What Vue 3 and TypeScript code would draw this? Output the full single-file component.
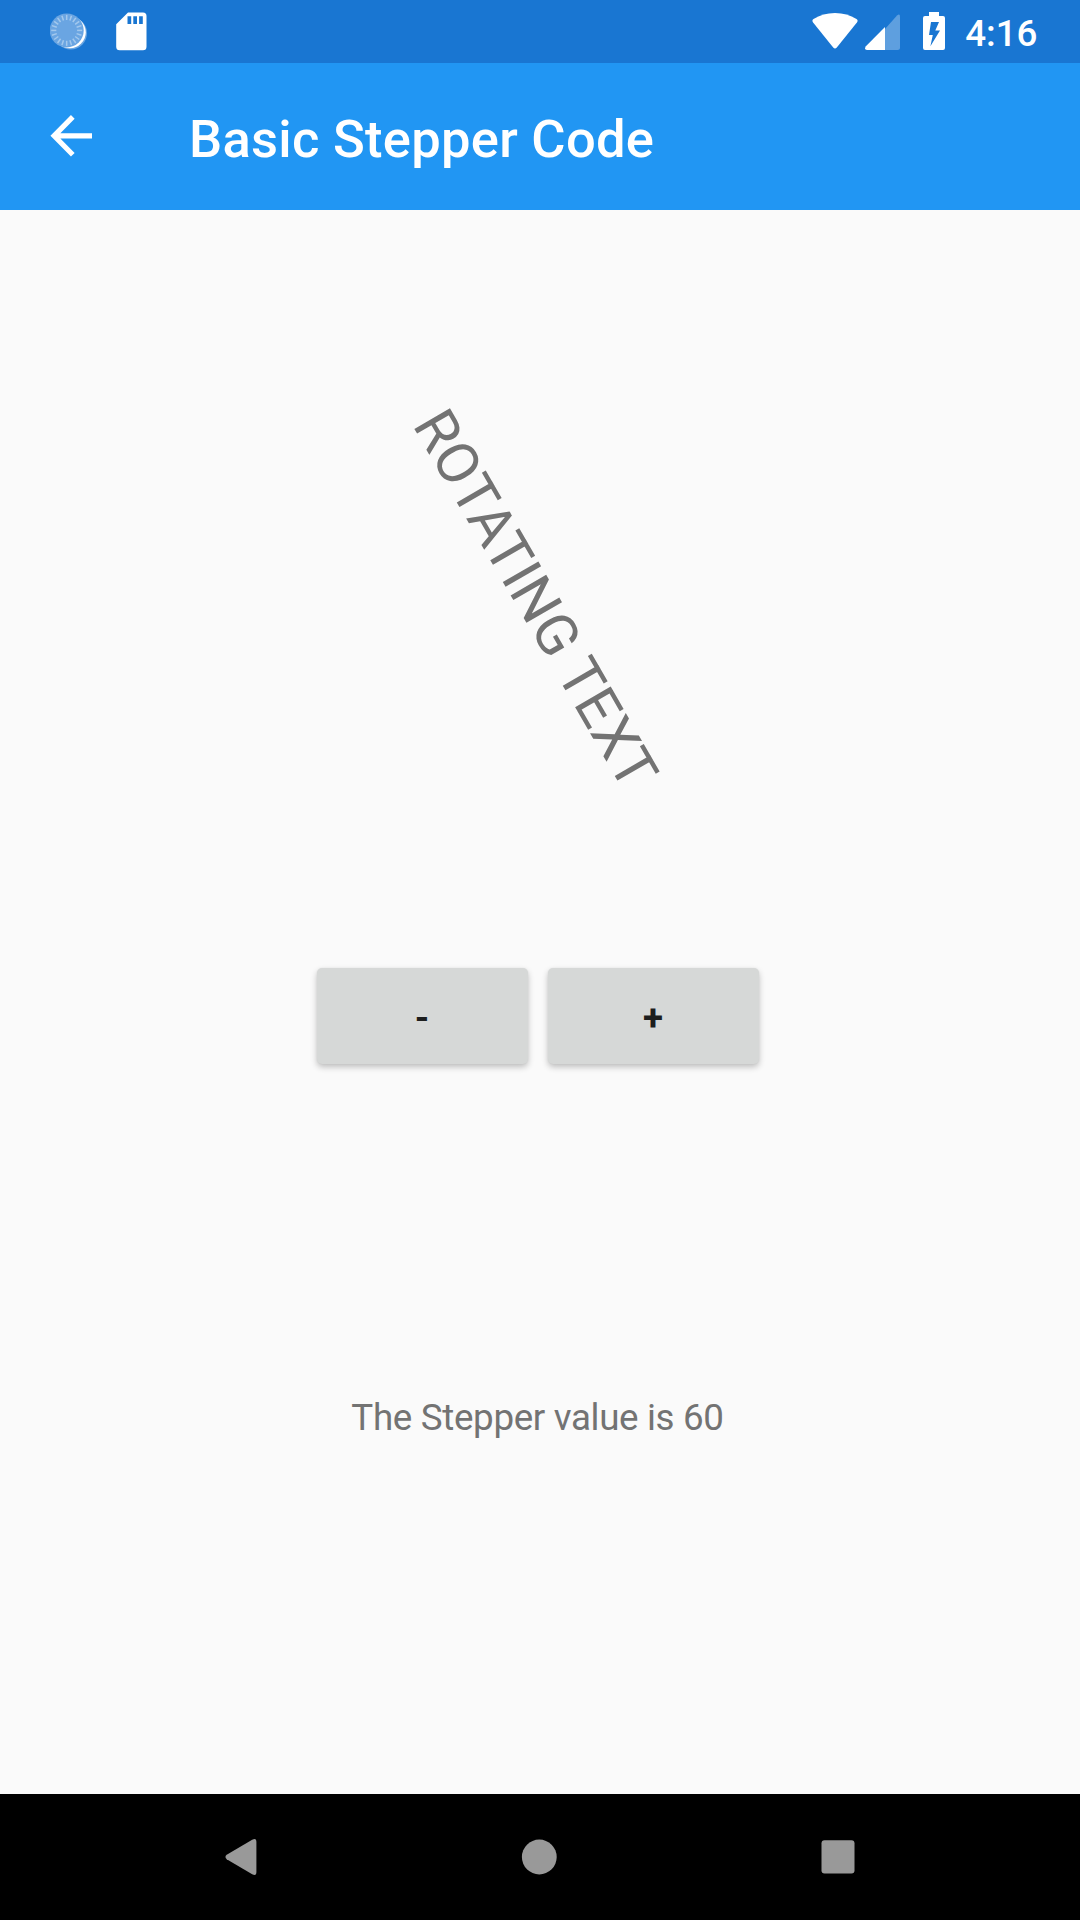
<script setup lang="ts">
import { computed, ref } from 'vue'

const increment = 30
const maximum = 360
const value = ref(60)

const rotation = computed(() => ({ transform: `rotate(${value.value}deg)` }))
const ticks = Array.from({ length: 20 }, (_, i) => i * 18)

function step(delta: number): void {
  value.value = Math.min(maximum, Math.max(0, value.value + delta))
}
</script>

<template>
  <div class="screen">
    <header class="status">
      <div class="status-left">
        <svg width="40" height="40" viewBox="0 0 40 40">
          <circle cx="20.8" cy="21.3" r="16.2" fill="#fff" opacity="0.35" />
          <circle cx="19.8" cy="20.3" r="16" fill="#fff" />
          <circle cx="16.7" cy="18.4" r="17" fill="#6aa5e2" />
          <g stroke="#a3c8ed" stroke-width="1.5">
            <line v-for="a in ticks" :key="a" x1="16.7" y1="2.9" x2="16.7" y2="8" :transform="`rotate(${a} 16.7 18.4)`" />
          </g>
        </svg>
        <svg class="sd" width="32" height="40" viewBox="0 0 32 40">
          <path fill="#fff" fill-rule="evenodd" d="M12 .6H27Q30.5.6 30.5 4.1V34.8Q30.5 38.3 27 38.3H3.7Q.2 38.3 .2 34.8V12.2ZM11.5 4.3V12H15.2V4.3ZM17.3 4.3V12H21V4.3ZM23.1 4.3V12H26.8V4.3Z" />
        </svg>
      </div>
      <div class="status-right">
        <svg width="46" height="37" viewBox="0 0 46 37">
          <path fill="#fff" d="M1.1 10.5Q-.5 8.5 1.5 7.1Q10.8 1 23 1T44.5 7.1Q46.5 8.5 44.9 10.5L24.8 35.5Q23 37.6 21.2 35.5Z" />
        </svg>
        <svg class="cell" width="35" height="36" viewBox="0 0 35 36">
          <path fill="#fff" opacity="0.3" d="M20 15L32 1.5Q35-.8 35 2.5V33.5Q35 36 32.5 36H20Z" />
          <path fill="#fff" d="M20 13V36H2Q-1.3 35.5 .9 32.3Z" />
        </svg>
        <svg class="battery" width="22" height="38" viewBox="0 0 22 38">
          <path fill="#fff" fill-rule="evenodd" d="M6 0H16V4H20Q22 4 22 6V36Q22 38 20 38H2Q0 38 0 36V6Q0 4 2 4H6ZM8 10L6 23H9.8L7.4 34.3L17 18.4H12.3L16 10Z" />
        </svg>
        <span class="clock">4:16</span>
      </div>
    </header>

    <div class="toolbar">
      <svg width="42" height="42" viewBox="0 0 42 42" fill="none" stroke="#fff" stroke-width="5.2">
        <path d="M22.8 1.9L4.1 20.8L22.8 39.8M4.1 20.8H42" />
      </svg>
      <h1>Basic Stepper Code</h1>
    </div>

    <main>
      <div class="stage"><span class="rotating" :style="rotation">ROTATING TEXT</span></div>
      <div class="stepper">
        <button type="button" @click="step(-increment)">-</button>
        <button type="button" @click="step(increment)">+</button>
      </div>
      <p class="result">The Stepper value is {{ value }}</p>
    </main>

    <nav>
      <svg width="32" height="36" viewBox="0 0 32 36">
        <path fill="#999" d="M27.2.8Q31.4-1.4 31.4 3V33Q31.4 37.4 27.2 35.2L1.7 20.2Q-.8 18 1.7 15.8Z" />
      </svg>
      <svg class="home" width="36" height="36" viewBox="0 0 36 36"><circle cx="18.3" cy="18" r="17.4" fill="#999" /></svg>
      <svg class="recent" width="34" height="34" viewBox="0 0 34 34"><rect x=".5" y=".3" width="33" height="33.3" rx="3" fill="#999" /></svg>
    </nav>
  </div>
</template>

<style>
body {
  margin: 0;
  background: #fafafa;
}
</style>

<style scoped>
.screen {
  width: 1080px;
  height: 1920px;
  display: flex;
  flex-direction: column;
  overflow: hidden;
  background: #fafafa;
  font-family: Roboto, sans-serif;
}
svg {
  display: block;
  flex: none;
}
.status {
  height: 63px;
  flex: none;
  display: flex;
  justify-content: space-between;
  align-items: flex-start;
  box-sizing: border-box;
  padding: 12px 42.5px 0 50px;
  background: #1976d2;
}
.status-left,
.status-right {
  display: flex;
  align-items: flex-start;
}
.sd {
  margin-left: 26px;
}
.cell {
  margin: 2px 0 0 7px;
}
.battery {
  margin-left: 23px;
}
.clock {
  margin: 0 0 0 20px;
  font-size: 36.75px;
  line-height: 43px;
  font-weight: 500;
  color: #fff;
}
.toolbar {
  height: 147px;
  flex: none;
  display: flex;
  align-items: flex-start;
  box-sizing: border-box;
  padding: 52px 0 0 50px;
  background: #2196f3;
}
h1 {
  margin: -7px 0 0 97px;
  font-size: 52.5px;
  line-height: 62px;
  font-weight: 500;
  letter-spacing: 0.28px;
  color: #fff;
}
main {
  flex: 1;
  display: flex;
  flex-direction: column;
  align-items: center;
}
.stage {
  height: 758px;
  width: 1072px;
  margin-right: 8px;
  display: flex;
  align-items: center;
  justify-content: center;
}
.rotating {
  margin-top: 19px;
  font-size: 57.75px;
  line-height: 68px;
  letter-spacing: 0.22px;
  white-space: nowrap;
  color: #737373;
}
.stepper {
  display: flex;
  gap: 20px;
  margin-right: 4px;
}
button {
  width: 211px;
  height: 96px;
  border: 0;
  border-radius: 5px;
  padding: 2px 1px 0 0;
  background: #d6d8d7;
  box-shadow: 0 3px 6px rgba(0, 0, 0, 0.24), 0 0 2px rgba(0, 0, 0, 0.06);
  font: 700 36.75px/43px Roboto, sans-serif;
  color: #1d1e1e;
}
.result {
  margin: 332px 5px 0 0;
  font-size: 36.75px;
  line-height: 43px;
  letter-spacing: -0.34px;
  color: #737373;
}
nav {
  height: 126px;
  flex: none;
  display: flex;
  align-items: center;
  box-sizing: border-box;
  padding-left: 225px;
  background: #000;
}
.home {
  margin: -1px 0 0 264px;
}
.recent {
  margin-left: 264px;
}
</style>
